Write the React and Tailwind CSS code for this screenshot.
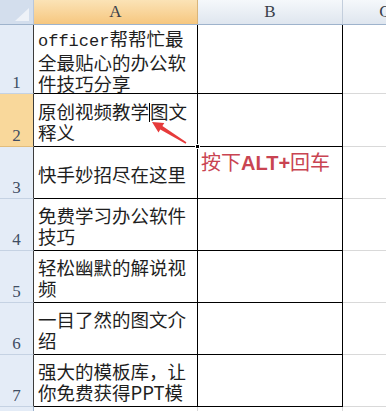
const rows = [
  { h: "h-[69px]", lines: [["mono", "officer"], "帮帮忙最", "\n", "全最贴心的办公软", "\n", "件技巧分享"] },
  { h: "h-[53px]", active: true, lines: ["原创视频教学", ["cursor"], "图文", "\n", "释义"] },
  { h: "h-[52px]", lines: ["快手妙招尽在这里"], note: true },
  { h: "h-[52px]", lines: ["免费学习办公软件", "\n", "技巧"] },
  { h: "h-[52px]", lines: ["轻松幽默的解说视", "\n", "频"] },
  { h: "h-[52px]", lines: ["一目了然的图文介", "\n", "绍"] },
  { h: "h-[52px]", lines: ["强大的模板库，让", "\n", "你免费获得PPT模"] },
];

const cellFont = { fontFamily: '"Noto Sans CJK SC", sans-serif' };
const serif = { fontFamily: '"Liberation Serif", serif' };

// split the token list into visual lines
const toLines = (tokens) => {
  const out = [[]];
  tokens.forEach((t) => {
    if (t === "\n") out.push([]);
    else out[out.length - 1].push(t);
  });
  return out;
};

const Token = ({ t }) => {
  if (typeof t === "string") return <span>{t}</span>;
  if (t[0] === "mono")
    return (
      <span className="text-[17px]" style={{ fontFamily: '"Liberation Mono", monospace' }}>
        {t[1]}
      </span>
    );
  return <span className="inline-block w-0 h-[19px] border-l border-black align-[-3px]" />;
};

const App = () => {
  return (
    <div className="relative w-[386px] h-[411px] overflow-hidden bg-white">
      {/* column headers */}
      <div className="flex h-[25px] border-b border-[#9eb3cc]">
        <div className="relative w-[34px] shrink-0 bg-[#d3deed] border-r border-[#b9c7da]">
          <div
            className="absolute right-[4px] bottom-[3px] w-[14px] h-[13px] bg-[#eef2f8]"
            style={{ clipPath: "polygon(100% 0, 100% 100%, 0 100%)" }}
          />
        </div>
        <div
          className="w-[164px] shrink-0 flex items-center justify-center bg-linear-to-b from-[#fbe3b6] to-[#f6c77f] border-r border-[#d9b57a] text-[17px] text-[#3a3f4a]"
          style={serif}
        >
          A
        </div>
        <div
          className="w-[145px] shrink-0 flex items-center justify-center bg-linear-to-b from-[#f5f8fb] to-[#dfe6ef] border-r border-[#c3cedc] text-[17px] text-[#3a3f4a]"
          style={serif}
        >
          B
        </div>
        <div
          className="w-[84px] shrink-0 flex items-center justify-center bg-linear-to-b from-[#f5f8fb] to-[#dfe6ef] text-[17px] text-[#3a3f4a]"
          style={serif}
        >
          C
        </div>
      </div>

      {rows.map((r, i) => (
        <div key={i} className={`flex ${r.h}`}>
          <div
            className={`w-[34px] shrink-0 flex items-end justify-center pb-[1px] border-r border-[#3c3c3c] border-b text-[17px] leading-[18px] text-[#3f4d63] ${
              r.active ? "bg-[#f9d89b] border-b-[#e2bd7c]" : "bg-[#e4ecf7] border-b-[#c5d2e3]"
            }`}
            style={serif}
          >
            {i + 1}
          </div>
          <div
            className="w-[164px] shrink-0 flex flex-col justify-center pl-[4px] pt-[3px] border-r border-b border-black text-[18.5px] leading-[21px] text-[#1e1e1e] whitespace-nowrap"
            style={cellFont}
          >
            {toLines(r.lines).map((line, j) => (
              <div key={j}>
                {line.map((t, k) => (
                  <Token key={k} t={t} />
                ))}
              </div>
            ))}
          </div>
          <div className="w-[145px] shrink-0 border-r border-b border-black pl-[3px] pt-[3px] whitespace-nowrap">
            {r.note && (
              <span className="text-[20px] leading-[24px] text-[#c94452]" style={cellFont}>
                按下
                <span className="font-bold" style={{ fontFamily: '"Liberation Sans", sans-serif' }}>
                  ALT+
                </span>
                回车
              </span>
            )}
          </div>
          <div className="w-[84px] shrink-0 border-b border-[#d9d9d9]" />
        </div>
      ))}

      <div className="flex h-[52px]">
        <div className="w-[34px] shrink-0 bg-[#e4ecf7] border-r border-[#9eb3cc]" />
        <div className="w-[164px] shrink-0 border-r border-[#d9d9d9]" />
        <div className="w-[145px] shrink-0 border-r border-[#d9d9d9]" />
      </div>

      {/* fill handle of the active cell */}
      <div className="absolute left-[195px] top-[144px] w-[5px] h-[5px] bg-black border border-white" />

      {/* red arrow pointing at the cursor */}
      <svg className="absolute left-0 top-0 pointer-events-none" width="386" height="411">
        <polygon
          points="152,122 164.3,123.1 162.4,126.1 186.4,142.3 185.6,143.7 160.3,129.5 158.5,132.5"
          fill="#e63b3b"
        />
      </svg>
    </div>
  );
};

export default App;
